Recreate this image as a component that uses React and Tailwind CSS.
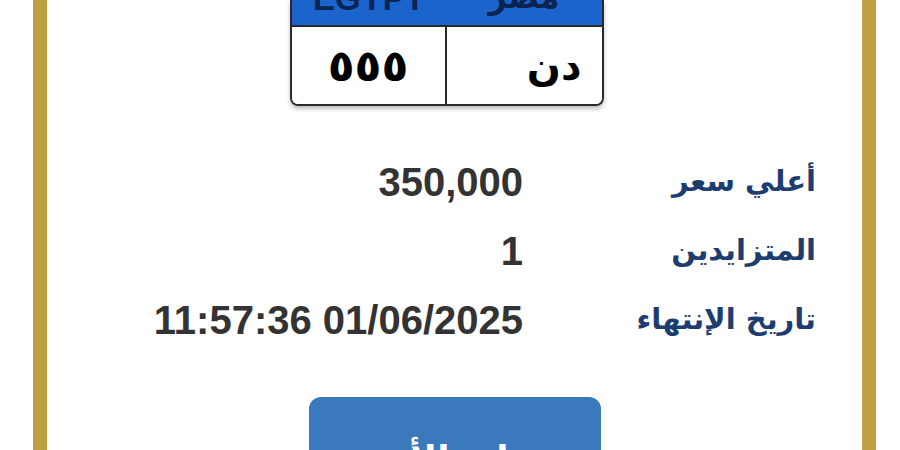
export default function App() {
  const ar = { fontFamily: '"DejaVu Sans", "Noto Sans", sans-serif' };
  const lat = { fontFamily: '"Liberation Sans", Arial, sans-serif' };
  const rows = [
    { label: "أعلي سعر", value: "350,000" },
    { label: "المتزايدين", value: "1" },
    { label: "تاريخ الإنتهاء", value: "11:57:36 01/06/2025" },
  ];

  return (
    <div className="w-[900px] h-[450px] overflow-hidden bg-white">
      <div className="ml-[33px] w-[843px] h-[450px] border-x-[14px] border-[#bf9f40] bg-white flex flex-col">
        {/* plate */}
        <div className="flex justify-center pr-[16px]">
          <div className="w-[314px] rounded-b-[8px] border-2 border-t-0 border-[#2a2a2a] shadow-[0_3px_4px_rgba(0,0,0,0.25)] overflow-hidden">
            <div className="h-[27px] bg-[#1a64cc] border-b-2 border-[#2a2a2a] flex overflow-hidden">
              <div className="w-1/2 flex justify-center">
                <span style={lat} className="text-[33px] leading-none font-bold text-[#0b2452] mt-[-18px]">EGYPT</span>
              </div>
              <div className="w-1/2 flex justify-center">
                <span style={ar} className="text-[32px] leading-none font-bold text-[#0b2452] mt-[-19px]">مصر</span>
              </div>
            </div>
            <div className="h-[77px] flex bg-white">
              <div className="w-1/2 flex items-center justify-center border-r-2 border-[#2a2a2a]">
                <span style={ar} className="text-[44px] font-bold text-black leading-none">٥٥٥</span>
              </div>
              <div dir="rtl" className="w-1/2 flex items-center pr-[20px]">
                <span style={ar} className="text-[40px] font-bold text-black leading-none">دن</span>
              </div>
            </div>
          </div>
        </div>

        {/* details */}
        <div dir="rtl" className="mt-[41px] pr-[46px] flex flex-col">
          {rows.map((r) => (
            <div key={r.label} className="h-[69px] flex items-center">
              <div style={ar} className="w-[293px] text-[29px] font-bold text-[#1d3d70]">
                {r.label}
              </div>
              <div dir="ltr" style={lat} className="text-[40px] font-bold text-[#333333] leading-none">
                {r.value}
              </div>
            </div>
          ))}
        </div>

        {/* button */}
        <div className="mt-[43px] flex justify-center">
          <div dir="rtl" className="w-[292px] h-[90px] rounded-[12px] bg-[#3a79bb] flex justify-center pt-[44px]">
            <span style={ar} className="text-[36px] font-bold text-white leading-none">زايد الأن</span>
          </div>
        </div>
      </div>
    </div>
  );
}
